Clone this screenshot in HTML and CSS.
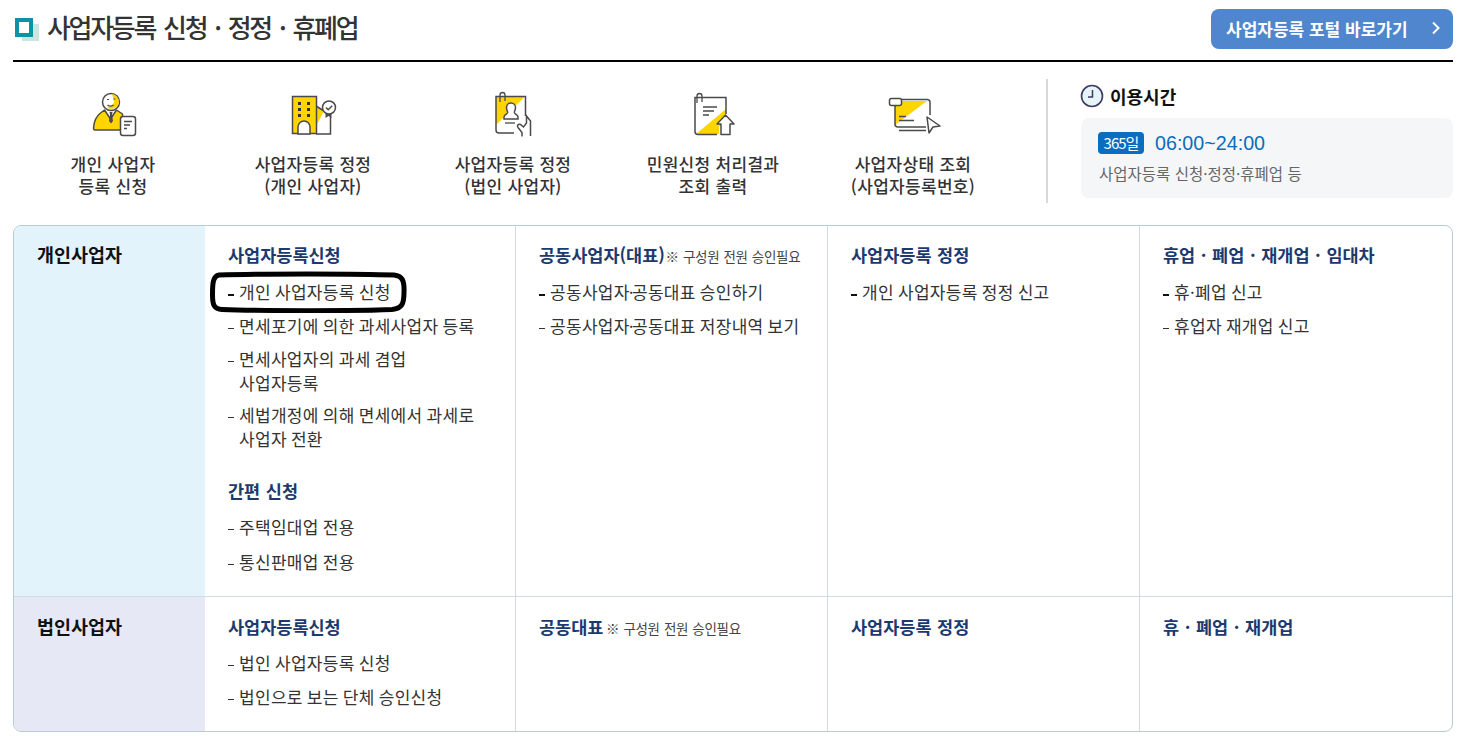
FILE: index.html
```html
<!DOCTYPE html>
<html lang="ko">
<head>
<meta charset="utf-8">
<title>사업자등록 신청 · 정정 · 휴폐업</title>
<link rel="stylesheet" href="styles.css">
</head>
<body>
<div class="page">
  <header class="head">
    <h1 class="title">
      <svg class="title-mark" width="24" height="24" viewBox="0 0 24 24"><rect x="7" y="6" width="17" height="17" fill="#cde5e0"/><rect x="2" y="2" width="14" height="15" fill="#fff" stroke="#0a93a8" stroke-width="4"/></svg>
      <span>사업자등록 신청 · 정정 · 휴폐업</span>
    </h1>
    <a class="portal" href="#"><span>사업자등록 포털 바로가기</span>
      <svg width="10" height="14" viewBox="0 0 10 14"><path d="M2 1.500 7.500 7 2 12.500" fill="none" stroke="#fff" stroke-width="2"/></svg>
    </a>
  </header>

  <section class="top">
    <nav class="quick">
      <a class="quick-item" href="#">
        <svg width="60" height="50" viewBox="0 0 60 50">
          <path d="M12 42c-1 0-1.500-1-1.500-2 .5-7 3-12 7-15l4-3 6 9 6-9 6 4v16H12z" fill="#ffd500" stroke="#4a4a4a" stroke-width="1.500" stroke-linejoin="round"/>
          <path d="M26.500 24h3l-.5 3 1 6-2 2.500-2-2.500 1-6z" fill="#4a4a4a"/>
          <circle cx="28" cy="14" r="8.500" fill="#fff" stroke="#4a4a4a" stroke-width="1.500"/>
          <path d="M29 6a8 8 0 0 1 7 8c0 3-3 7-8 7-2 0-3-1-4-2 3 0 4-1 5-2 2-2 3-1 0-11z" fill="#ffd500"/>
          <path d="M24.500 17c2 1.500 4 1.500 6 0M24 11.500h2M30.500 11h2" fill="none" stroke="#4a4a4a" stroke-width="1.200"/>
          <rect x="37.500" y="28.500" width="15" height="19" rx="2.500" fill="#fff" stroke="#4a4a4a" stroke-width="1.500"/>
          <path d="M41 33.500h8M41 37h6M41 40.500h3" stroke="#4a4a4a" stroke-width="1.300"/>
        </svg>
        <span>개인 사업자<br>등록 신청</span>
      </a>
      <a class="quick-item" href="#">
        <svg width="60" height="50" viewBox="0 0 60 50">
          <path d="M33 18 41 23 33 38z" fill="#ffd500"/>
          <path d="M33 18l8 5M47.500 29v17H33" fill="none" stroke="#4a4a4a" stroke-width="1.500"/>
          <rect x="9.500" y="8.500" width="24" height="37" fill="#ffd500" stroke="#4a4a4a" stroke-width="1.500"/>
          <path d="M15 46V39a6 6 0 0 1 12 0v7z" fill="#fff" stroke="#4a4a4a" stroke-width="1.500"/>
          <path d="M15 14h3v3h-3zM24 14h3v3h-3zM15 20h3v3h-3zM24 20h3v3h-3zM15 26h3v3h-3zM24 26h3v3h-3z" fill="#333"/>
          <path d="M42.500 24v6l3-2 3 2v-6z" fill="#4a4a4a"/>
          <circle cx="46" cy="19.500" r="6.500" fill="#fff" stroke="#4a4a4a" stroke-width="1.500"/>
          <path d="M43 19.500l2.200 2.200 4-4" fill="none" stroke="#4a4a4a" stroke-width="1.500"/>
        </svg>
        <span>사업자등록 정정<br>(개인 사업자)</span>
      </a>
      <a class="quick-item" href="#">
        <svg width="60" height="50" viewBox="0 0 60 50">
          <path d="M13 8.500H42L13 37z" fill="#ffd500"/>
          <path d="M31 45H16a3 3 0 0 1-3-3V8.500h29.500V28" fill="none" stroke="#4a4a4a" stroke-width="1.500"/>
          <path d="M17 14V7a2.500 2.500 0 0 1 5 0v6" fill="none" stroke="#4a4a4a" stroke-width="1.300"/>
          <path d="M28 15a4.500 4.500 0 0 1 4.500 4.500c0 3-1.500 4-1 5.500 .5 1 3.500 2 3.500 4v2H21v-2c0-2 3-3 3.500-4 .5-1.500-1-2.500-1-5.500A4.500 4.500 0 0 1 28 15z" fill="#fff" stroke="#4a4a4a" stroke-width="1.500"/>
          <path d="M22 35h10" stroke="#4a4a4a" stroke-width="1.300"/>
          <path d="M47.500 48V33l-4-5v7l-3 4-3-2.500c-2-1-4 1-2.500 3l4 5v4" fill="#fff" stroke="#4a4a4a" stroke-width="1.500"/>
        </svg>
        <span>사업자등록 정정<br>(법인 사업자)</span>
      </a>
      <a class="quick-item" href="#">
        <svg width="60" height="50" viewBox="0 0 60 50">
          <path d="M43 21V38H36V46H13l30-25z" fill="#ffd500"/>
          <path d="M34 46.500H15a3 3 0 0 1-3-3V9.500h31V26" fill="none" stroke="#4a4a4a" stroke-width="1.500"/>
          <path d="M14 15V8a2.500 2.500 0 0 1 5 0v6" fill="none" stroke="#4a4a4a" stroke-width="1.300"/>
          <path d="M20 19h14M20 23h11M20 27h6" stroke="#4a4a4a" stroke-width="1.300"/>
          <path d="M42.500 27 51 36l-4 0v10.500H38V36h-4z" fill="#fff" stroke="#4a4a4a" stroke-width="1.500" stroke-linejoin="round"/>
        </svg>
        <span>민원신청 처리결과<br>조회 출력</span>
      </a>
      <a class="quick-item" href="#">
        <svg width="60" height="50" viewBox="0 0 60 50">
          <path d="M12 13H44L12 37z" fill="#ffd500"/>
          <path d="M43 39H15a3 3 0 0 1-3-3V14M18 11.500h26a3 3 0 0 1 3 3V27" fill="none" stroke="#4a4a4a" stroke-width="1.500"/>
          <rect x="6.500" y="10.500" width="12" height="7" rx="2" fill="#fff" stroke="#4a4a4a" stroke-width="1.500"/>
          <path d="M16 28.500h7M16 32.500h15M16 42.500h27" stroke="#4a4a4a" stroke-width="1.300"/>
          <path d="M44 29 57 38l-7 1-4 6z" fill="#fff" stroke="#4a4a4a" stroke-width="1.500" stroke-linejoin="round"/>
        </svg>
        <span>사업자상태 조회<br>(사업자등록번호)</span>
      </a>
    </nav>
    <aside class="hours">
      <h2 class="hours-title">
        <svg class="clock" width="24" height="24" viewBox="0 0 24 24"><circle cx="12" cy="12" r="10.500" fill="#e6f3f7" stroke="#3c3a62" stroke-width="1.600"/><path d="M12.500 6v7H8" fill="none" stroke="#3c3a62" stroke-width="1.500"/></svg>
        <span>이용시간</span>
      </h2>
      <div class="hours-box">
        <p class="hours-time"><b class="badge">365일</b><span>06:00~24:00</span></p>
        <p class="hours-desc">사업자등록 신청·정정·휴폐업 등</p>
      </div>
    </aside>
  </section>

  <section class="board">
    <div class="row row-first">
      <h2 class="kind kind-a">개인사업자</h2>
      <div class="cell">
        <h3 class="cell-title">사업자등록신청</h3>
        <ul class="menu">
          <li class="circled">개인 사업자등록 신청
            <svg class="oval" width="200" height="42" viewBox="0 0 200 42"><path d="M10 4C50 2.500 150 2.500 185 4 193 5 195.500 9 195 21 195 33 193 37.500 183 38.500 150 40 50 40 13 38.500 5 38 3.500 34 3.500 24 3.500 12 4 5 10 4z" fill="none" stroke="#000" stroke-width="5"/></svg>
          </li>
          <li>면세포기에 의한 과세사업자 등록</li>
          <li class="tight">면세사업자의 과세 겸업<br>사업자등록</li>
          <li>세법개정에 의해 면세에서 과세로<br>사업자 전환</li>
        </ul>
        <h3 class="cell-title cell-title-next">간편 신청</h3>
        <ul class="menu menu-wide">
          <li>주택임대업 전용</li>
          <li>통신판매업 전용</li>
        </ul>
      </div>
      <div class="cell">
        <h3 class="cell-title">공동사업자(대표) <small class="note-tight">※ 구성원 전원 승인필요</small></h3>
        <ul class="menu menu-lead">
          <li>공동사업자<span class="dot">·</span>공동대표 승인하기</li>
          <li>공동사업자<span class="dot">·</span>공동대표 저장내역 보기</li>
        </ul>
      </div>
      <div class="cell">
        <h3 class="cell-title">사업자등록 정정</h3>
        <ul class="menu menu-lead">
          <li>개인 사업자등록 정정 신고</li>
        </ul>
      </div>
      <div class="cell">
        <h3 class="cell-title">휴업 · 폐업 · 재개업 · 임대차</h3>
        <ul class="menu menu-lead">
          <li>휴·폐업 신고</li>
          <li>휴업자 재개업 신고</li>
        </ul>
      </div>
    </div>
    <div class="row row-second">
      <h2 class="kind kind-b">법인사업자</h2>
      <div class="cell">
        <h3 class="cell-title">사업자등록신청</h3>
        <ul class="menu">
          <li>법인 사업자등록 신청</li>
          <li>법인으로 보는 단체 승인신청</li>
        </ul>
      </div>
      <div class="cell">
        <h3 class="cell-title">공동대표 <small>※ 구성원 전원 승인필요</small></h3>
      </div>
      <div class="cell">
        <h3 class="cell-title">사업자등록 정정</h3>
      </div>
      <div class="cell">
        <h3 class="cell-title">휴 · 폐업 · 재개업</h3>
      </div>
    </div>
  </section>
</div>
</body>
</html>
```
FILE: styles.css
```css
* { box-sizing: border-box; }
html, body { margin: 0; padding: 0; background: #fff; }
body {
  font-family: "Noto Sans CJK KR", "Noto Sans", "Liberation Sans", sans-serif;
  color: #333;
  overflow: hidden;
}
a { color: inherit; text-decoration: none; }
h1, h2, h3, p, ul { margin: 0; padding: 0; }
ul { list-style: none; }

.page { width: 1440px; margin-left: 13px; }

.head {
  height: 62px;
  border-bottom: 2px solid #000;
  display: flex;
  justify-content: space-between;
  align-items: flex-start;
  padding-top: 9px;
}
.title {
  display: flex;
  align-items: center;
  gap: 8px;
  height: 34px;
  padding-left: 2px;
  font-size: 26px;
  font-weight: 500;
  letter-spacing: -2.300px;
  word-spacing: 3px;
  color: #333;
}
.title-mark { flex: none; margin-top: 7px; }
.portal {
  width: 242px;
  height: 40px;
  background: #4f86cd;
  border-radius: 8px;
  color: #fff;
  font-size: 17px;
  font-weight: 700;
  display: flex;
  align-items: center;
  justify-content: space-between;
  padding: 0 12px 2px 15px;
}

.top {
  display: flex;
  padding-top: 17px;
  height: 163px;
}
.quick {
  width: 1035px;
  height: 124px;
  border-right: 2px solid #d9d9d9;
  padding-right: 33px;
  display: grid;
  grid-template-columns: repeat(5, 200px);
  flex: none;
}
.quick-item {
  display: flex;
  flex-direction: column;
  align-items: center;
  padding-top: 9px;
  font-size: 17px;
  font-weight: 500;
  letter-spacing: 0.300px;
  line-height: 21.500px;
  text-align: center;
  color: #333;
}
.quick-item svg { margin-bottom: 15px; flex: none; }

.hours { margin-left: 33px; flex: 1; }
.hours-title {
  display: flex;
  align-items: center;
  gap: 6px;
  height: 24px;
  margin-top: 5px;
  font-size: 18px;
  font-weight: 700;
  color: #111;
}
.clock { margin-left: -1px; }
.hours-box {
  margin-top: 10px;
  height: 80px;
  background: #f4f6f8;
  border-radius: 8px;
  padding: 13px 17px;
}
.hours-time {
  display: flex;
  align-items: center;
  gap: 11px;
  height: 24px;
  font-size: 19.700px;
  color: #0a6dbd;
  font-family: "Liberation Sans", sans-serif;
}
.badge {
  background: #0a6dbd;
  color: #fff;
  font-weight: 400;
  font-size: 15px;
  letter-spacing: -1px;
  border-radius: 4px;
  width: 46px;
  height: 22px;
  line-height: 21px;
  text-align: center;
  font-family: "Noto Sans CJK KR", sans-serif;
}
.hours-desc {
  margin-top: 8px;
  font-size: 15.500px;
  line-height: 20px;
  color: #666;
  padding-left: 1px;
}

.board {
  border: 1px solid #b7cbd2;
  border-radius: 8px;
  overflow: hidden;
}
.row {
  display: grid;
  grid-template-columns: 191px 310px 312px 312px 313px;
  height: 134px;
}
.row-first {
  height: 371px;
  border-bottom: 1px solid #cfdde0;
}
.kind {
  font-size: 18.500px;
  font-weight: 700;
  line-height: 26px;
  color: #111;
  padding: 16px 0 0 23px;
}
.kind-a { background: #e3f3fb; padding-top: 15px; }
.kind-b { background: #e6e8f5; }
.cell {
  border-left: 1px solid #cfdde0;
  padding: 17px 20px 0 23px;
}
.row-second .cell { padding-top: 18px; }
.row-second .menu { margin-top: 11px; }
.kind + .cell { border-left: 0; padding-left: 23px; }
.cell-title {
  font-size: 17.500px;
  font-weight: 700;
  line-height: 26px;
  height: 26px;
  word-spacing: 0.700px;
  color: #1d3a6e;
  margin-top: -1px;
  white-space: nowrap;
}
.cell-title small {
  font-size: 13.500px;
  line-height: 1;
  font-weight: 400;
  color: #444;
  letter-spacing: -0.300px;
  margin-left: -3px;
}
.cell-title .note-tight { margin-left: -5px; }
.cell-title-next { margin-top: 27px; }
.menu { margin-top: 12px; }
.menu-wide { margin-top: 11px; }
.menu li {
  position: relative;
  padding-left: 11px;
  min-height: 26px;
  font-size: 17px;
  letter-spacing: 0.300px;
  word-spacing: -1px;
  line-height: 24px;
  color: #333;
  margin-bottom: 8px;
}
.menu .tight { margin-top: -1px; }
.menu-wide li { min-height: 27px; }
.menu .dot { letter-spacing: -1.500px; margin-left: -1px; }
.menu li::before {
  content: "";
  position: absolute;
  left: 0;
  top: 14px;
  width: 6px;
  height: 1px;
  background: #333;
}
.menu .circled::before,
.menu-lead li:first-child::before { height: 2px; background: #111; }
.oval {
  position: absolute;
  left: -19px;
  top: -9px;
  pointer-events: none;
}
```
